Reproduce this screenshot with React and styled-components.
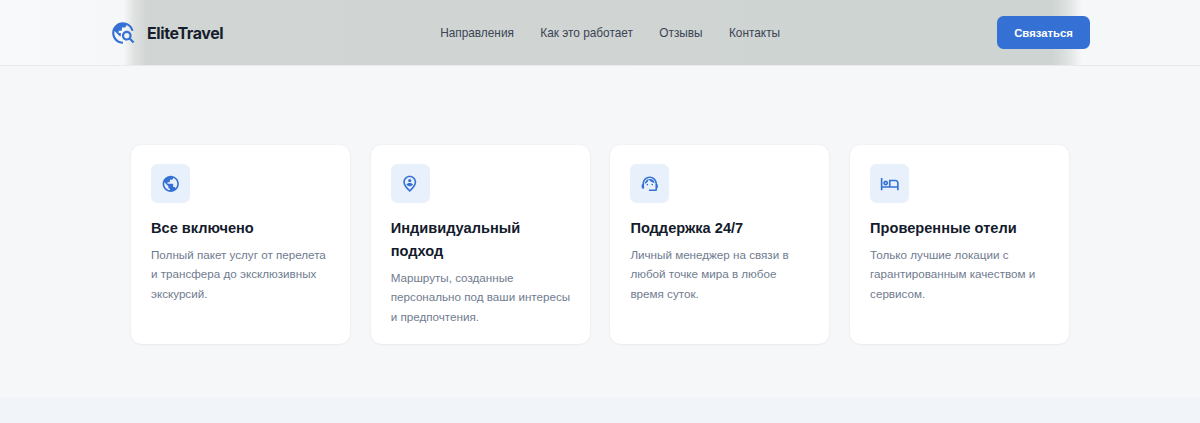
import React from "react";
import styled, { createGlobalStyle } from "styled-components";
import { MdTravelExplore, MdPublic, MdOutlinePersonPinCircle, MdSupportAgent, MdOutlineHotel } from "react-icons/md";

const Global = createGlobalStyle`
  html, body { margin: 0; padding: 0; background: #f6f7f9; }
  body { font-family: "Liberation Sans", Arial, sans-serif; -webkit-font-smoothing: antialiased; }
`;

const Page = styled.div`
  height: 423px;
  overflow: hidden;
  display: flex;
  flex-direction: column;
`;

const Header = styled.header`
  height: 65px;
  flex: none;
  border-bottom: 1px solid #e8eaee;
  background: linear-gradient(
    to right,
    #f8f9fb 0,
    #f6f7f8 124px,
    #dfe2e1 134px,
    #d1d6d4 146px,
    #d0d5d3 600px,
    #cdd4d1 1052px,
    #dfe3e2 1068px,
    #f6f7f9 1082px,
    #f6f7f9 100%
  );
  display: flex;
  justify-content: space-between;
  align-items: center;
  padding: 0 110px 0 110px;
`;

const Brand = styled.div`
  display: flex;
  align-items: center;
  gap: 11px;
  color: #3571d4;
  font-size: 26px;
  line-height: 0;
`;

const BrandName = styled.span`
  color: #161e2e;
  font-family: Inter, "Liberation Sans", sans-serif;
  font-size: 16px;
  font-weight: 700;
  line-height: 20px;
  letter-spacing: -0.4px;
`;

const Nav = styled.nav`
  display: flex;
  gap: 26.3px;
`;

const NavLink = styled.a`
  color: #3b4454;
  font-size: 11.85px;
  line-height: 18px;
`;

const CallButton = styled.button`
  width: 93px;
  height: 33px;
  border: 0;
  border-radius: 6.5px;
  background: #3571d4;
  color: #fff;
  font-family: inherit;
  font-size: 11.3px;
  font-weight: 700;
  padding: 0;
`;

const Main = styled.main`
  height: 331px;
  flex: none;
  padding: 79px 131px 0;
  box-sizing: border-box;
`;

const Cards = styled.div`
  display: grid;
  grid-template-columns: repeat(4, 1fr);
  gap: 20.8px;
`;

const Card = styled.article`
  height: 199px;
  box-sizing: border-box;
  background: #fff;
  border-radius: 10.4px;
  padding: 19px 17.5px 0 20px;
  box-shadow: 0 0 3px rgba(30, 50, 90, 0.06), 0 1px 2px rgba(30, 50, 90, 0.03);
`;

const IconTile = styled.div`
  width: 39px;
  height: 39px;
  border-radius: 6.5px;
  background: #e8f0fb;
  color: #3571d4;
  display: flex;
  align-items: center;
  justify-content: center;
  font-size: 19.5px;
  margin-bottom: 13.5px;
`;

const CardTitle = styled.h3`
  margin: 0 0 5px;
  color: #131b2c;
  font-size: 14.6px;
  font-weight: 700;
  line-height: 23.2px;
`;

const CardText = styled.p`
  margin: 0;
  color: #6f7b8f;
  font-size: 11.65px;
  line-height: 19.4px;
`;

const Footer = styled.div`
  flex: 1;
  background: #f1f4f9;
`;

const links = ["Направления", "Как это работает", "Отзывы", "Контакты"];
const cards = [
  { Icon: MdPublic, title: "Все включено", text: "Полный пакет услуг от перелета и трансфера до эксклюзивных экскурсий." },
  { Icon: MdOutlinePersonPinCircle, title: "Индивидуальный подход", text: "Маршруты, созданные персонально под ваши интересы и предпочтения." },
  { Icon: MdSupportAgent, title: "Поддержка 24/7", text: "Личный менеджер на связи в любой точке мира в любое время суток." },
  { Icon: MdOutlineHotel, title: "Проверенные отели", text: "Только лучшие локации с гарантированным качеством и сервисом." },
];

export default function App() {
  return (
    <Page>
      <Global />
      <Header>
        <Brand>
          <MdTravelExplore />
          <BrandName>EliteTravel</BrandName>
        </Brand>
        <Nav>
          {links.map((l) => (
            <NavLink key={l}>{l}</NavLink>
          ))}
        </Nav>
        <CallButton>Связаться</CallButton>
      </Header>
      <Main>
        <Cards>
          {cards.map(({ Icon, title, text }) => (
            <Card key={title}>
              <IconTile>
                <Icon />
              </IconTile>
              <CardTitle>{title}</CardTitle>
              <CardText>{text}</CardText>
            </Card>
          ))}
        </Cards>
      </Main>
      <Footer />
    </Page>
  );
}
